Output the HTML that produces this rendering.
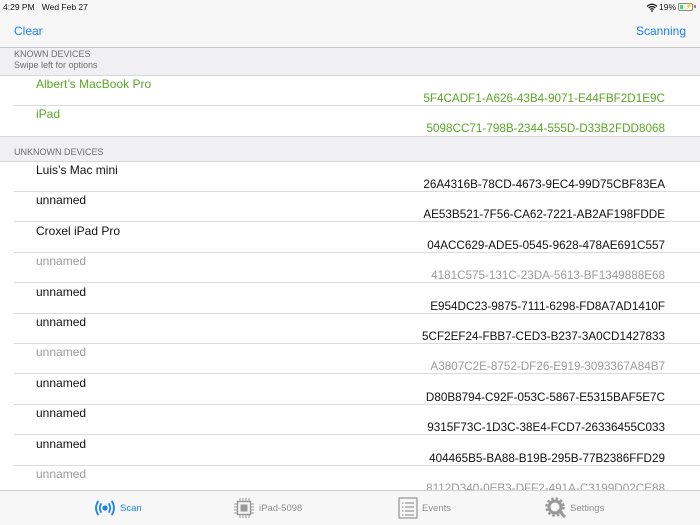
<!DOCTYPE html>
<html><head><meta charset="utf-8"><style>
*{margin:0;padding:0;box-sizing:border-box}
body{width:700px;height:525px;overflow:hidden;background:#fff;font-family:"Liberation Sans",sans-serif;position:relative}
.a{position:absolute;white-space:nowrap}
.hdr{position:absolute;left:0;width:700px;background:#efeff4;border-bottom:1px solid #d8d8dc}
.hdr span{position:absolute;left:14px;font-size:9px;color:#6d6d72}
.row{position:absolute;left:0;width:700px;height:30px}
.row .n{position:absolute;left:36px;top:1px;font-size:12px;line-height:14px;color:#111}
.row .u{position:absolute;right:35px;top:16px;font-size:11.7px;line-height:14px;color:#111}
.row .l{position:absolute;left:14px;right:0;bottom:0;height:1px;background:#dcdce0}
.g .n,.g .u{color:#5aa626}
.d .n,.d .u{color:#9b9b9b}
.tab{position:absolute;top:490px;left:0;width:700px;height:35px;background:#f7f7f7;border-top:1px solid #cfcfd2}
.t{position:absolute;top:12px;font-size:9.5px;color:#8e8e93}
</style></head><body>
<div class="a" style="left:0;top:0;width:700px;height:48px;background:#f7f7f7;border-bottom:1px solid #c8c8cc"></div>
<div class="a" style="left:3px;top:2px;font-size:8.5px;color:#111">4:29 PM&nbsp;&nbsp; Wed Feb 27</div>
<svg class="a" style="left:646px;top:3px" width="12" height="9" viewBox="0 0 12 9"><path d="M1 3.5Q6 -1 11 3.5M2.7 5Q6 2 9.3 5M4.3 6.5Q6 5 7.7 6.5" stroke="#111" stroke-width="1.3" fill="none"/><circle cx="6" cy="8" r="0.9" fill="#111"/></svg>
<div class="a" style="left:659px;top:2px;font-size:8.5px;color:#111">19%</div>
<div class="a" style="left:678px;top:3px;width:15px;height:8px;border:1px solid #888;border-radius:2px"><div style="position:absolute;left:1px;top:1px;width:3px;height:4px;background:#4cd964"></div><div style="position:absolute;left:6px;top:0;font-size:6px;line-height:6px">⚡</div></div>
<div class="a" style="left:694px;top:5px;width:1.5px;height:3px;background:#888"></div>
<div class="a" style="left:14px;top:24px;font-size:12px;color:#1a82fb">Clear</div>
<div class="a" style="right:14px;top:24px;font-size:12px;color:#1a82fb">Scanning</div>

<div class="hdr" style="top:48px;height:28px"><span style="top:1px">KNOWN DEVICES</span><span style="top:12px">Swipe left for options</span></div>
<div class="row g" style="top:76px"><div class="n">Albert’s MacBook Pro</div><div class="u">5F4CADF1-A626-43B4-9071-E44FBF2D1E9C</div><div class="l"></div></div>
<div class="row g" style="top:106px"><div class="n">iPad</div><div class="u">5098CC71-798B-2344-555D-D33B2FDD8068</div></div>
<div class="hdr" style="top:136px;height:26px;border-top:1px solid #d8d8dc"><span style="top:10px">UNKNOWN DEVICES</span></div>

<div class="row" style="top:162px"><div class="n">Luis’s Mac mini</div><div class="u">26A4316B-78CD-4673-9EC4-99D75CBF83EA</div><div class="l"></div></div>
<div class="row" style="top:192.4px"><div class="n">unnamed</div><div class="u">AE53B521-7F56-CA62-7221-AB2AF198FDDE</div><div class="l"></div></div>
<div class="row" style="top:222.8px"><div class="n">Croxel iPad Pro</div><div class="u">04ACC629-ADE5-0545-9628-478AE691C557</div><div class="l"></div></div>
<div class="row d" style="top:253.2px"><div class="n">unnamed</div><div class="u">4181C575-131C-23DA-5613-BF1349888E68</div><div class="l"></div></div>
<div class="row" style="top:283.6px"><div class="n">unnamed</div><div class="u">E954DC23-9875-7111-6298-FD8A7AD1410F</div><div class="l"></div></div>
<div class="row" style="top:314px"><div class="n">unnamed</div><div class="u">5CF2EF24-FBB7-CED3-B237-3A0CD1427833</div><div class="l"></div></div>
<div class="row d" style="top:344.4px"><div class="n">unnamed</div><div class="u">A3807C2E-8752-DF26-E919-3093367A84B7</div><div class="l"></div></div>
<div class="row" style="top:374.8px"><div class="n">unnamed</div><div class="u">D80B8794-C92F-053C-5867-E5315BAF5E7C</div><div class="l"></div></div>
<div class="row" style="top:405.2px"><div class="n">unnamed</div><div class="u">9315F73C-1D3C-38E4-FCD7-26336455C033</div><div class="l"></div></div>
<div class="row" style="top:435.6px"><div class="n">unnamed</div><div class="u">404465B5-BA88-B19B-295B-77B2386FFD29</div><div class="l"></div></div>
<div class="row d" style="top:466px"><div class="n">unnamed</div><div class="u">8112D340-0EB3-DFF2-491A-C3199D02CE88</div></div>

<div class="tab">
<svg class="a" style="left:94px;top:9px" width="22" height="16" viewBox="0 0 22 16"><circle cx="11" cy="8" r="2.6" fill="#1a82fb"/><path d="M7 4Q4.5 8 7 12M15 4Q17.5 8 15 12M4 1.5Q0 8 4 14.5M18 1.5Q22 8 18 14.5" stroke="#1a82fb" stroke-width="1.8" fill="none" stroke-linecap="round"/></svg>
<div class="t" style="left:120px;color:#1a82fb">Scan</div>
<svg class="a" style="left:234px;top:7px" width="20" height="20" viewBox="0 0 20 20"><rect x="3.5" y="3.5" width="13" height="13" fill="none" stroke="#999" stroke-width="1.4"/><rect x="6.5" y="6.5" width="7" height="7" fill="#999"/><path d="M6 0v3M9 0v3M12 0v3M15 0v3M6 17v3M9 17v3M12 17v3M15 17v3M0 6h3M0 9h3M0 12h3M0 15h3M17 6h3M17 9h3M17 12h3M17 15h3" stroke="#999" stroke-width="1"/></svg>
<div class="t" style="left:259px">iPad-5098</div>
<svg class="a" style="left:398px;top:6px" width="20" height="22" viewBox="0 0 20 22"><rect x="1" y="1" width="18" height="20" fill="none" stroke="#999" stroke-width="1.3"/><path d="M4 6h1.5M4 10h1.5M4 14h1.5M4 18h1.5M7 6h9M7 10h9M7 14h9M7 18h9" stroke="#999" stroke-width="1.2"/></svg>
<div class="t" style="left:422px">Events</div>
<svg class="a" style="left:545px;top:6px" width="22" height="22" viewBox="0 0 22 22"><circle cx="10" cy="10" r="6" fill="none" stroke="#999" stroke-width="3"/><circle cx="10" cy="10" r="8.5" fill="none" stroke="#999" stroke-width="2.5" stroke-dasharray="2.5 2"/><path d="M13 13l7 7" stroke="#999" stroke-width="3"/></svg>
<div class="t" style="left:570px">Settings</div>
</div>
</body></html>
